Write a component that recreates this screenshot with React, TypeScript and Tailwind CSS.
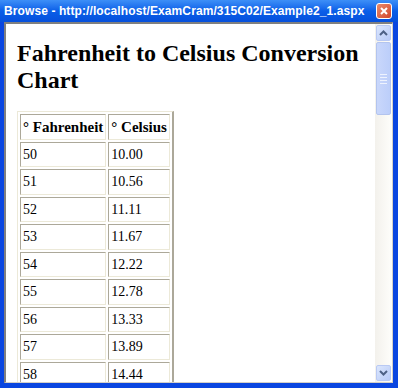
import React from 'react';

const rows = [
    ['50', '10.00'],
    ['51', '10.56'],
    ['52', '11.11'],
    ['53', '11.67'],
    ['54', '12.22'],
    ['55', '12.78'],
    ['56', '13.33'],
    ['57', '13.89'],
    ['58', '14.44'],
];

const cell =
    'h-[25.5px] px-[2px] text-left border border-t-[#aca899] border-l-[#aca899] border-r-[#ece9d8] border-b-[#ece9d8]';

function ScrollButton({ dir }: { dir: 'up' | 'down' }) {
    return (
        <div className="w-[15px] h-[16px] mx-[1px] rounded-[2px] border border-[#b9c9f3] bg-gradient-to-br from-[#dbe6fd] to-[#b8cbf7] flex items-center justify-center">
            <svg width="9" height="6" viewBox="0 0 9 6">
                {dir === 'up' ? (
                    <path d="M1 5 L4.5 1.5 L8 5" fill="none" stroke="#4d6185" strokeWidth="2" />
                ) : (
                    <path d="M1 1 L4.5 4.5 L8 1" fill="none" stroke="#4d6185" strokeWidth="2" />
                )}
            </svg>
        </div>
    );
}

export default function App() {
    return (
        <div className="w-[398px] h-[388px] flex flex-col bg-[#0a46e0] overflow-hidden">
            {/* title bar */}
            <div className="h-[22px] shrink-0 flex items-center pl-[4px] pr-[6px] bg-gradient-to-b from-[#3d8ff7] via-[#0a5ee8] to-[#0650dc]">
                <span
                    className="flex-1 text-white font-bold text-[12px] tracking-[0.1px] leading-none whitespace-nowrap"
                    style={{ fontFamily: '"Liberation Sans", Arial, sans-serif' }}
                >
                    Browse - http://localhost/ExamCram/315C02/Example2_1.aspx
                </span>
                <div className="w-[16px] h-[16px] rounded-[3px] border border-white bg-gradient-to-br from-[#e98a6b] to-[#d1442a] flex items-center justify-center">
                    <svg width="10" height="10" viewBox="0 0 10 10">
                        <path d="M2 2 L8 8 M8 2 L2 8" stroke="white" strokeWidth="2" />
                    </svg>
                </div>
            </div>

            {/* client area */}
            <div className="flex-1 min-h-0 ml-[4px] mr-[5px] mb-[5px] flex border-t-2 border-l-2 border-r border-b border-t-[#808080] border-l-[#808080] border-r-[#d4d0c8] border-b-[#d4d0c8]">
                <div
                    className="flex-1 min-h-0 overflow-hidden bg-white pl-[11px] text-black"
                    style={{ fontFamily: '"Liberation Serif", "Times New Roman", serif' }}
                >
                    <h1 className="font-bold text-[24px] leading-[27px] mt-[16px] mb-[17px]">
                        Fahrenheit to Celsius Conversion Chart
                    </h1>
                    <table className="border-separate border-spacing-[2px] border border-t-[#ece9d8] border-l-[#ece9d8] border-r-[#aca899] border-b-[#aca899] border-r-2 border-b-2">
                        <tbody>
                            <tr>
                                <th className={`${cell} font-bold text-[15px]`}>° Fahrenheit</th>
                                <th className={`${cell} font-bold text-[15px]`}>° Celsius</th>
                            </tr>
                            {rows.map(([f, c]) => (
                                <tr key={f}>
                                    <td className={`${cell} text-[14px]`}>{f}</td>
                                    <td className={`${cell} text-[14px]`}>{c}</td>
                                </tr>
                            ))}
                        </tbody>
                    </table>
                </div>

                {/* scrollbar */}
                <div className="w-[17px] shrink-0 flex flex-col bg-gradient-to-r from-[#f3f1ec] to-[#fefefb] py-[1px]">
                    <ScrollButton dir="up" />
                    <div className="mx-[1px] mt-[1px] h-[73px] rounded-[2px] border border-[#b3c4ee] bg-gradient-to-r from-[#c9d7fb] to-[#bccefa] flex flex-col items-center justify-center gap-[2px]">
                        <div className="w-[7px] h-px bg-[#eef3fe]" />
                        <div className="w-[7px] h-px bg-[#eef3fe]" />
                        <div className="w-[7px] h-px bg-[#eef3fe]" />
                        <div className="w-[7px] h-px bg-[#eef3fe]" />
                    </div>
                    <div className="flex-1" />
                    <ScrollButton dir="down" />
                </div>
            </div>
        </div>
    );
}
